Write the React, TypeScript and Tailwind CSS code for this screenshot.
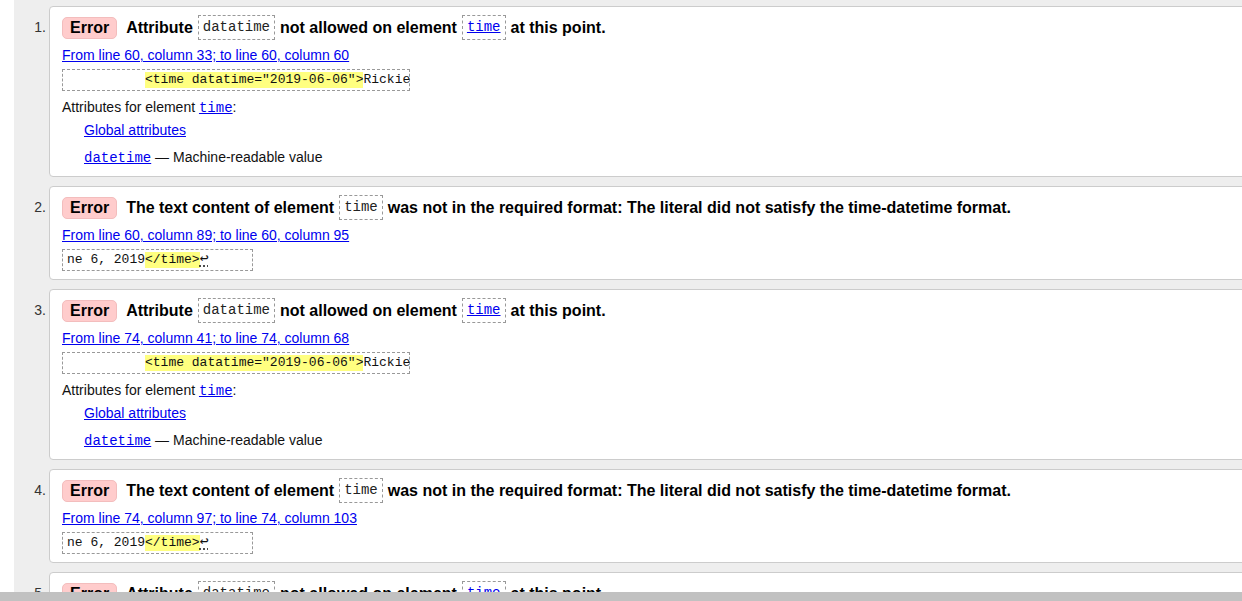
import React from "react";

type Msg = {
  kind: "attr" | "text";
  from: string;
};

const messages: Msg[] = [
  { kind: "attr", from: "From line 60, column 33; to line 60, column 60" },
  { kind: "text", from: "From line 60, column 89; to line 60, column 95" },
  { kind: "attr", from: "From line 74, column 41; to line 74, column 68" },
  { kind: "text", from: "From line 74, column 97; to line 74, column 103" },
  { kind: "attr", from: "From line 88, column 41; to line 88, column 68" },
];

const sans = "font-['Liberation_Sans',Arial,sans-serif]";
const mono = "font-['Liberation_Mono','Courier_New',monospace]";

const CodeBox = ({ children, link }: { children: React.ReactNode; link?: boolean }) => (
  <span
    className={`inline-flex h-[25px] items-center border border-dashed border-[#999] px-[4px] text-[14px] font-normal ${mono} ${
      link ? "text-[#0000ee] underline" : "text-[#222]"
    }`}
  >
    {children}
  </span>
);

const Badge = () => (
  <span className="mr-[4px] inline-flex h-[22px] items-center rounded-[5px] border border-[#f3bdbd] bg-[#ffcccc] px-[7px] text-[16px] font-bold text-black">
    Error
  </span>
);

const Heading = ({ kind }: { kind: Msg["kind"] }) => (
  <div className="flex h-[25px] items-center gap-[5px] whitespace-nowrap text-[16px] font-bold text-black">
    <Badge />
    {kind === "attr" ? (
      <>
        <span>Attribute</span>
        <CodeBox>datatime</CodeBox>
        <span>not allowed on element</span>
        <CodeBox link>time</CodeBox>
        <span>at this point.</span>
      </>
    ) : (
      <>
        <span>The text content of element</span>
        <CodeBox>time</CodeBox>
        <span>
          was not in the required format: The literal did not satisfy the time-datetime format.
        </span>
      </>
    )}
  </div>
);

const Extract = ({ kind }: { kind: Msg["kind"] }) => (
  <div
    className={`mt-[6px] flex h-[22px] items-center border border-dashed border-[#999] px-[4px] text-[13px] leading-[16px] text-[#111] whitespace-pre ${mono} ${
      kind === "attr" ? "w-[348px]" : "w-[191px]"
    }`}
  >
    {kind === "attr" ? (
      <>
        <span>{"          "}</span>
        <span className="bg-[#ffff80]">{'<time datatime="2019-06-06">'}</span>
        <span>Rickie</span>
      </>
    ) : (
      <>
        <span>ne 6, 2019</span>
        <span className="bg-[#ffff80]">{"</time>"}</span>
        <span className="text-[15px] underline decoration-dotted underline-offset-[3px]">↩</span>
      </>
    )}
  </div>
);

const Card = ({ msg, n }: { msg: Msg; n: number }) => (
  <li className="flex">
    <div className={`w-[35px] shrink-0 pr-[3px] pt-[13px] text-right text-[14px] leading-[16px] text-[#333] ${sans}`}>
      {n}.
    </div>
    <div
      className={`flex-1 rounded-l-[4px] border border-[#cccccc] bg-white pl-[12px] pt-[8px] ${sans} ${
        msg.kind === "attr" ? "pb-[10px]" : "pb-[8px]"
      }`}
    >
      <Heading kind={msg.kind} />
      <div className="mt-[7px] text-[14px] leading-[16px]">
        <a className="text-[#0000ee] underline" href="#">
          {msg.from}
        </a>
      </div>
      <Extract kind={msg.kind} />
      {msg.kind === "attr" && (
        <>
          <div className="mt-[8px] text-[14px] leading-[16px] text-[#111]">
            Attributes for element{" "}
            <a className={`text-[#0000ee] underline ${mono}`} href="#">
              time
            </a>
            :
          </div>
          <div className="mt-[6px] pl-[22px] text-[14px] leading-[16px]">
            <a className="text-[#0000ee] underline" href="#">
              Global attributes
            </a>
          </div>
          <div className="mt-[11px] pl-[22px] text-[14px] leading-[16px] text-[#111]">
            <a className={`text-[#0000ee] underline ${mono}`} href="#">
              datetime
            </a>{" "}
            — Machine-readable value
          </div>
        </>
      )}
    </div>
  </li>
);

export default function App() {
  return (
    <div className="relative h-[601px] w-[1242px] overflow-hidden bg-white pl-[14px]">
      <ol className="flex w-[1260px] flex-col gap-[9px] bg-[#eeeeee] pt-[6px] pb-[20px]">
        {messages.map((m, i) => (
          <Card key={i} msg={m} n={i + 1} />
        ))}
      </ol>
      <div className="absolute bottom-0 left-0 right-0 h-[9px] bg-[#c1c1c1]" />
    </div>
  );
}
